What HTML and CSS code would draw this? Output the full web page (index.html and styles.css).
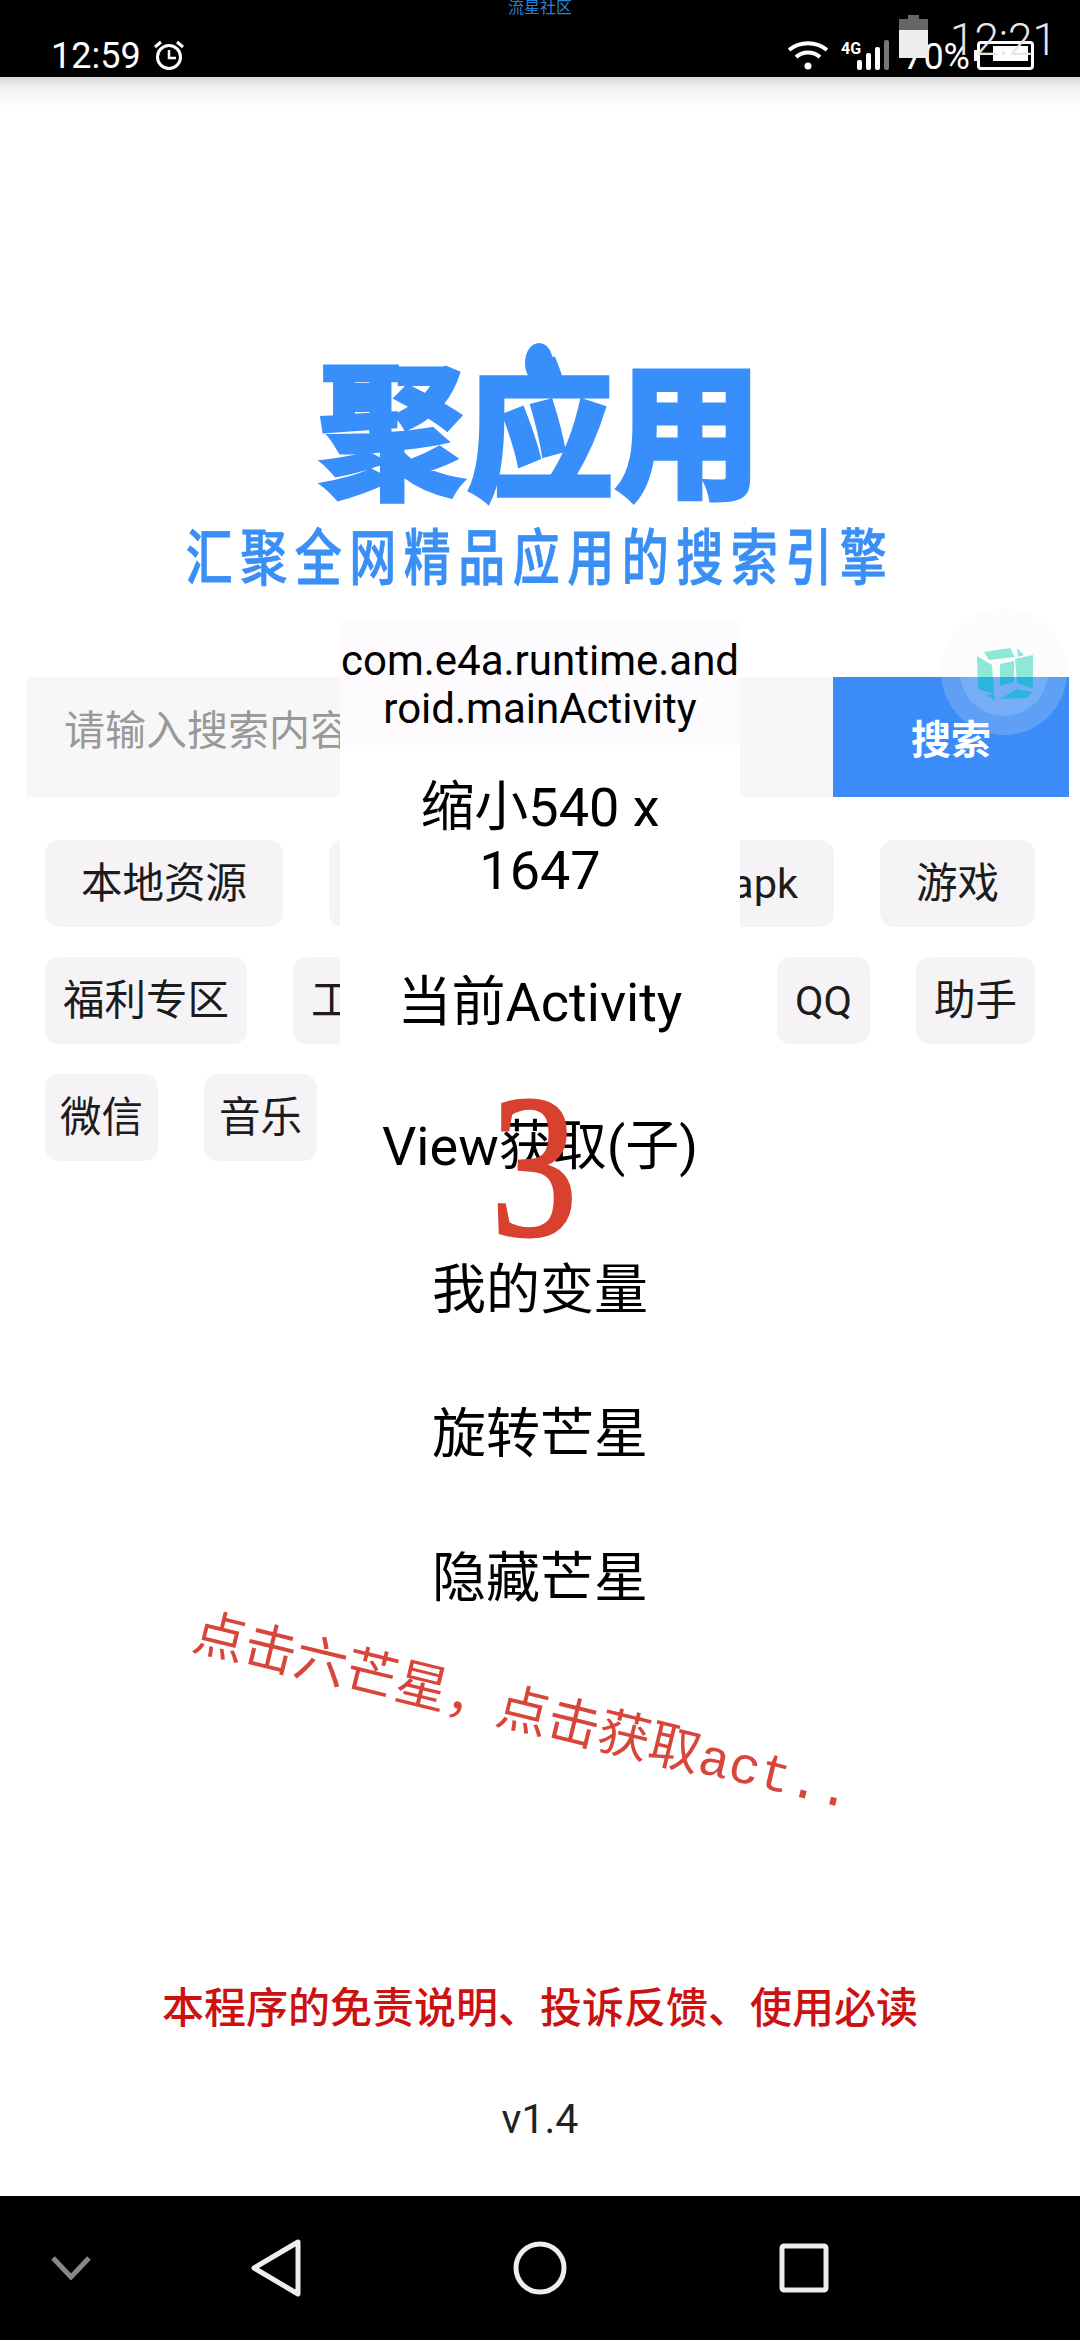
FILE: index.html
```html
<!DOCTYPE html>
<html lang="zh-CN">
<head>
    <meta charset="UTF-8">
    <meta name="viewport" content="width=device-width, initial-scale=1.0">
    <title>聚应用</title>
    <link rel="stylesheet" href="styles.css">
</head>
<body>
    <div class="status-bar">
        <span class="clock">12:59</span>
        <svg class="alarm" viewBox="0 0 32 32" fill="none" stroke="#fff" stroke-width="3">
            <circle cx="16" cy="18" r="11.5"/>
            <path d="M16 11v8h7" stroke-width="2.5"/>
            <path d="M2 8l6-5M30 8l-6-5"/>
        </svg>
        <div class="status-right">
            <svg class="wifi" viewBox="0 0 40 30" fill="none" stroke="#fff" stroke-width="4">
                <path d="M1 10c11-9 27-9 38 0"/>
                <path d="M8 17c7-6 17-6 24 0"/>
                <circle cx="20" cy="26" r="3.5" fill="#fff" stroke="none"/>
            </svg>
            <svg class="signal" viewBox="0 0 50 30">
                <text x="0" y="14" class="signal-label">4G</text>
                <rect x="16" y="20" width="5" height="10" rx="2" fill="#fff"/>
                <rect x="25" y="13" width="5" height="17" rx="2" fill="#fff"/>
                <rect x="34" y="7" width="5" height="23" rx="2" fill="#fff"/>
                <rect x="43" y="0" width="5" height="30" rx="2" fill="#777"/>
            </svg>
            <span class="percent">70%</span>
            <div class="battery"><div class="battery-fill"></div></div>
        </div>
        <span class="top-label">流星社区</span>
        <div class="old-battery"></div>
        <span class="old-clock">12:21</span>
    </div>

    <div class="main">
        <div class="top-shadow"></div>
        <div class="logo">聚应用<span class="logo-dome"></span></div>
        <div class="slogan">汇聚全网精品应用的搜索引擎</div>

        <div class="search">
            <input class="search-input" type="text" placeholder="请输入搜索内容">
            <button class="search-btn">搜索</button>
        </div>

        <div class="tags">
            <div class="tag-row row-wide">
                <span class="tag">本地资源</span>
                <span class="tag tag-fill"></span>
                <span class="tag">apk</span>
                <span class="tag">游戏</span>
            </div>
            <div class="tag-row">
                <span class="tag">福利专区</span>
                <span class="tag">工具</span>
                <span class="tag tag-fill"></span>
                <span class="tag">QQ</span>
                <span class="tag">助手</span>
            </div>
            <div class="tag-row row-tight">
                <span class="tag">微信</span>
                <span class="tag">音乐</span>
            </div>
        </div>

        <div class="footer">
            <div class="notice">本程序的免责说明、投诉反馈、使用必读</div>
            <div class="version">v1.4</div>
        </div>

        <div class="menu">
            <div class="menu-title">com.e4a.runtime.and<br>roid.mainActivity</div>
            <div class="menu-item menu-item-big">缩小540 x<br>1647</div>
            <div class="menu-item">当前Activity</div>
            <div class="menu-item">View获取(子)</div>
            <div class="menu-item">我的变量</div>
            <div class="menu-item">旋转芒星</div>
            <div class="menu-item">隐藏芒星</div>
        </div>

        <div class="countdown">3</div>
        <div class="toast">点击六芒星，点击获取act..</div>

        <div class="float-ball">
            <div class="ball-inner"></div>
            <svg class="cube" viewBox="0 0 56 54">
                <defs>
                    <linearGradient id="cubeFill" gradientUnits="userSpaceOnUse" x1="0" y1="0" x2="0" y2="54">
                        <stop offset="0.537" stop-color="#8ee8da"/>
                        <stop offset="0.537" stop-color="#2bb5dc"/>
                    </linearGradient>
                </defs>
                <g fill="url(#cubeFill)">
                    <path d="M7 4L33 0l5 9-26 3z"/>
                    <path d="M40 0l7 7-6 2z"/>
                    <path d="M0 8l15 9 2 29-16-5z"/>
                    <path d="M38 11l18-4v34l-16-6z"/>
                    <path d="M23 16l14-3v21l-14 4z"/>
                    <path d="M23 51l17-10 15 3-5 6z"/>
                    <path d="M8 47l9-1 1 6z"/>
                </g>
            </svg>
        </div>
    </div>

    <div class="nav-bar">
        <svg class="nav-down" viewBox="0 0 40 24" fill="none" stroke="#888" stroke-width="5">
            <path d="M2 2l18 19L38 2"/>
        </svg>
        <svg class="nav-back" viewBox="0 0 52 58" fill="none" stroke="#eee" stroke-width="5" stroke-linejoin="round">
            <path d="M48 3L4 29l44 26z"/>
        </svg>
        <svg class="nav-home" viewBox="0 0 54 54" fill="none" stroke="#eee" stroke-width="5">
            <circle cx="27" cy="27" r="24"/>
        </svg>
        <svg class="nav-recent" viewBox="0 0 50 50" fill="none" stroke="#eee" stroke-width="5" stroke-linejoin="round">
            <rect x="3" y="3" width="44" height="44" rx="2"/>
        </svg>
    </div>
</body>
</html>
```

FILE: styles.css
```css
body {
    font-family: Roboto, "Noto Sans CJK SC", sans-serif;
    margin: 0;
    width: 1080px;
    height: 2340px;
    overflow: hidden;
    display: flex;
    flex-direction: column;
    background: white;
    color: #000;
}

/* status bar */
.status-bar {
    position: relative;
    flex: none;
    height: 77px;
    background: black;
    color: white;
    display: flex;
    align-items: flex-end;
    padding: 0 46px 6px 51px;
    box-sizing: border-box;
}
.clock {
    font-size: 36px;
    line-height: 36px;
    margin-bottom: -3px;
}
.alarm {
    width: 32px;
    height: 32px;
    margin-left: 12px;
}
.status-right {
    margin-left: auto;
    display: flex;
    align-items: flex-end;
}
.wifi {
    width: 40px;
    height: 30px;
    margin-bottom: 1px;
}
.signal {
    width: 50px;
    height: 30px;
    margin-left: 13px;
    margin-bottom: 1px;
}
.signal-label {
    font-size: 16px;
    font-weight: 700;
    fill: white;
}
.percent {
    font-size: 36px;
    line-height: 34px;
    margin-left: 12px;
    margin-bottom: -3px;
}
.battery {
    position: relative;
    width: 57px;
    height: 29px;
    margin-left: 7px;
    margin-bottom: 1px;
    border: 3px solid white;
    border-radius: 4px;
    box-sizing: border-box;
}
.battery::before {
    content: "";
    position: absolute;
    left: -6px;
    top: 6px;
    width: 3px;
    height: 11px;
    background: white;
}
.battery-fill {
    position: absolute;
    left: 13px;
    right: 3px;
    top: 2px;
    bottom: 6px;
    background: white;
}
.top-label {
    position: absolute;
    left: 0;
    right: 0;
    top: -1px;
    text-align: center;
    font-size: 16px;
    line-height: 18px;
    color: #2a80d2;
}
.old-battery {
    position: absolute;
    left: 899px;
    top: 19px;
    width: 29px;
    height: 39px;
    background: linear-gradient(#666 11px, #eee 11px);
}
.old-battery::before {
    content: "";
    position: absolute;
    left: 9px;
    top: -4px;
    width: 11px;
    height: 4px;
    background: #666;
}
.old-clock {
    position: absolute;
    left: 950px;
    top: 16px;
    font-size: 44px;
    font-weight: 300;
    line-height: 48px;
    color: #e6e6e6;
}

/* page */
.main {
    position: relative;
    flex: 1;
    display: flex;
    flex-direction: column;
    min-height: 0;
}
.top-shadow {
    position: absolute;
    left: 0;
    right: 0;
    top: 0;
    height: 30px;
    background: linear-gradient(#d8d8d8, #f3f1f3 35%, #f7f5f7 60%, white);
}
.logo {
    position: relative;
    margin-top: 266px;
    height: 160px;
    text-align: center;
    font-family: "Noto Sans CJK SC", sans-serif;
    font-size: 148px;
    font-weight: 900;
    line-height: 160px;
    color: #388ffc;
    -webkit-text-stroke: 3px #388ffc;
}
.logo-dome {
    position: absolute;
    left: 525px;
    top: 0;
    width: 28px;
    height: 40px;
    border-radius: 50%;
    background: #388ffc;
}
.slogan {
    margin-top: 20px;
    height: 61px;
    text-align: center;
    font-family: "Noto Sans CJK SC", sans-serif;
    font-size: 47px;
    font-weight: 500;
    line-height: 61px;
    letter-spacing: 7.5px;
    color: #3a8ff5;
    -webkit-text-stroke: 0.6px #3a8ff5;
    transform: scaleY(1.3);
}
.search {
    display: flex;
    margin: 93px 11px 0 27px;
    height: 120px;
}
.search-input {
    flex: 1;
    min-width: 0;
    border: none;
    outline: none;
    background: #f7f7f7;
    padding: 0 0 21px 37px;
    font-family: "Noto Sans CJK SC", sans-serif;
    font-size: 41px;
}
.search-input::placeholder {
    color: #999;
}
.search-btn {
    flex: none;
    width: 236px;
    border: none;
    background: #3b8cf8;
    color: white;
    font-family: "Noto Sans CJK SC", sans-serif;
    font-size: 40px;
    font-weight: 700;
}

/* tags */
.tags {
    margin-top: 43px;
    padding: 0 45px;
    display: flex;
    flex-direction: column;
    gap: 30px;
}
.tag-row {
    display: flex;
    gap: 46px;
}
.tag {
    flex: none;
    height: 87px;
    padding: 0 18px;
    background: #f6f3f6;
    border-radius: 14px;
    font-family: Roboto, "Noto Sans CJK SC", sans-serif;
    font-size: 41.5px;
    line-height: 88px;
    color: #1c1c1c;
    white-space: nowrap;
}
.row-wide .tag {
    padding: 0 36px;
}
.row-tight .tag {
    padding: 0 15px;
}
.tag-row .tag-fill {
    flex: 1;
    padding: 0;
}

/* bottom text */
.footer {
    margin-top: auto;
    padding-bottom: 51px;
    text-align: center;
}
.notice {
    font-family: "Noto Sans CJK SC", sans-serif;
    font-size: 42px;
    font-weight: 500;
    line-height: 50px;
    color: #cc1111;
}
.version {
    margin-top: 63px;
    font-size: 41px;
    line-height: 52px;
    color: #222;
}

/* overlays */
.menu {
    position: absolute;
    left: 340px;
    top: 544px;
    width: 400px;
    background: white;
    text-align: center;
}
.menu-title {
    height: 124px;
    box-sizing: border-box;
    padding-top: 16px;
    background: #fdfbfd;
    font-size: 42px;
    line-height: 48px;
    white-space: nowrap;
}
.menu-item {
    height: 144px;
    display: flex;
    align-items: center;
    justify-content: center;
    padding-top: 2px;
    box-sizing: border-box;
    font-size: 54px;
    line-height: 63px;
    white-space: nowrap;
}
.menu-item-big {
    height: 184px;
    padding-top: 4px;
}
.countdown {
    position: absolute;
    left: 483px;
    top: 987px;
    font-family: "Liberation Serif", serif;
    font-size: 204px;
    line-height: 1;
    color: #d9412f;
    -webkit-text-stroke: 3px #d9412f;
    transform: scaleX(0.85);
}
.toast {
    position: absolute;
    left: 0;
    top: 1603px;
    width: 1044px;
    text-align: center;
    font-family: "Liberation Mono", "Noto Sans CJK SC", monospace;
    font-size: 52px;
    line-height: 72px;
    color: #d8453a;
    transform: rotate(13.7deg);
    white-space: nowrap;
}
.float-ball {
    position: absolute;
    left: 941px;
    top: 532px;
    width: 126px;
    height: 126px;
    border-radius: 50%;
    background: rgba(240, 240, 240, 0.2);
}
.ball-inner {
    position: absolute;
    inset: 19px;
    border-radius: 50%;
    background: rgba(255, 255, 255, 0.14);
}
.cube {
    position: absolute;
    left: 36px;
    top: 39px;
    width: 56px;
    height: 54px;
}

/* nav bar */
.nav-bar {
    flex: none;
    height: 144px;
    background: black;
    display: flex;
    align-items: center;
    padding-left: 51px;
}
.nav-down {
    width: 40px;
    height: 24px;
}
.nav-back {
    width: 52px;
    height: 58px;
    margin-left: 159px;
}
.nav-home {
    width: 54px;
    height: 54px;
    margin-left: 211px;
}
.nav-recent {
    width: 50px;
    height: 50px;
    margin-left: 212px;
}
```
